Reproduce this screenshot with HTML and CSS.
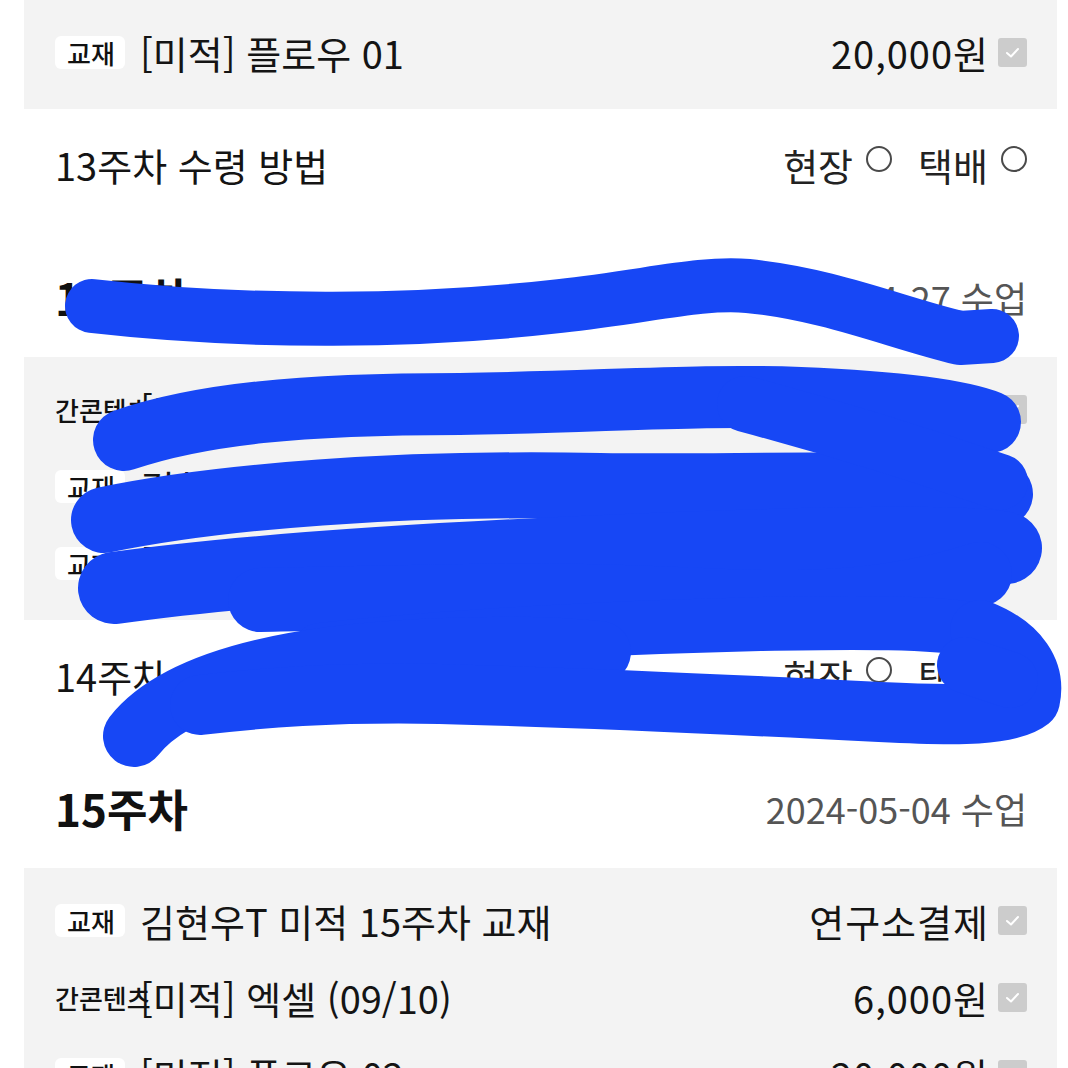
FILE: index.html
```html
<!DOCTYPE html>
<html lang="ko">
<head>
<meta charset="utf-8">
<title>수업 교재</title>
<link rel="stylesheet" href="styles.css">
</head>
<body>
<div class="page">
  <section class="panel">
    <div class="item">
      <span class="tag"><span class="tag-text tag-text--white">교재</span></span>
      <span class="item-name">[미적] 플로우 01</span>
      <span class="item-price">20,000원</span>
      <span class="check"><svg viewBox="0 0 29 29" width="29" height="29"><path d="M9 15 L13 18.5 L20 11" fill="none" stroke="#fff" stroke-width="2" stroke-linecap="round" stroke-linejoin="round"/></svg></span>
    </div>
  </section>

  <div class="receive">
    <span class="receive-title">13주차 수령 방법</span>
    <span class="opts">현장<i class="radio"></i>택배<i class="radio radio--last"></i></span>
  </div>

  <div class="week-head">
    <h2 class="week-title">14주차</h2>
    <span class="date">2024-04-27 수업</span>
  </div>

  <section class="panel">
    <div class="item">
      <span class="tag"><span class="tag-text">간콘텐츠</span></span>
      <span class="item-name">[미적] 엑셀 (09/09)</span>
      <span class="item-price">6,000원</span>
      <span class="check"><svg viewBox="0 0 29 29" width="29" height="29"><path d="M9 15 L13 18.5 L20 11" fill="none" stroke="#fff" stroke-width="2" stroke-linecap="round" stroke-linejoin="round"/></svg></span>
    </div>
    <div class="item">
      <span class="tag"><span class="tag-text tag-text--white">교재</span></span>
      <span class="item-name">김현우T 미적 14주차 교재</span>
      <span class="item-price">연구소결제</span>
      <span class="check"><svg viewBox="0 0 29 29" width="29" height="29"><path d="M9 15 L13 18.5 L20 11" fill="none" stroke="#fff" stroke-width="2" stroke-linecap="round" stroke-linejoin="round"/></svg></span>
    </div>
    <div class="item">
      <span class="tag"><span class="tag-text tag-text--white">교재</span></span>
      <span class="item-name">[미적] 플로우 02</span>
      <span class="item-price">20,000원</span>
      <span class="check"><svg viewBox="0 0 29 29" width="29" height="29"><path d="M9 15 L13 18.5 L20 11" fill="none" stroke="#fff" stroke-width="2" stroke-linecap="round" stroke-linejoin="round"/></svg></span>
    </div>
  </section>

  <div class="receive">
    <span class="receive-title">14주차 수령 방법</span>
    <span class="opts">현장<i class="radio"></i>택배<i class="radio radio--last"></i></span>
  </div>

  <div class="week-head">
    <h2 class="week-title">15주차</h2>
    <span class="date">2024-05-04 수업</span>
  </div>

  <section class="panel">
    <div class="item">
      <span class="tag"><span class="tag-text tag-text--white">교재</span></span>
      <span class="item-name">김현우T 미적 15주차 교재</span>
      <span class="item-price">연구소결제</span>
      <span class="check"><svg viewBox="0 0 29 29" width="29" height="29"><path d="M9 15 L13 18.5 L20 11" fill="none" stroke="#fff" stroke-width="2" stroke-linecap="round" stroke-linejoin="round"/></svg></span>
    </div>
    <div class="item">
      <span class="tag"><span class="tag-text">간콘텐츠</span></span>
      <span class="item-name">[미적] 엑셀 (09/10)</span>
      <span class="item-price">6,000원</span>
      <span class="check"><svg viewBox="0 0 29 29" width="29" height="29"><path d="M9 15 L13 18.5 L20 11" fill="none" stroke="#fff" stroke-width="2" stroke-linecap="round" stroke-linejoin="round"/></svg></span>
    </div>
    <div class="item">
      <span class="tag"><span class="tag-text tag-text--white">교재</span></span>
      <span class="item-name">[미적] 플로우 02</span>
      <span class="item-price">20,000원</span>
      <span class="check"><svg viewBox="0 0 29 29" width="29" height="29"><path d="M9 15 L13 18.5 L20 11" fill="none" stroke="#fff" stroke-width="2" stroke-linecap="round" stroke-linejoin="round"/></svg></span>
    </div>
  </section>

  <svg class="scribble" viewBox="0 0 1068 1068" width="1068" height="1068" aria-hidden="true">
    <g fill="none" stroke="#1747f5" stroke-linecap="round" stroke-linejoin="round">
      <path stroke-width="54" d="M92 306 C250 324 420 322 560 306 C650 296 700 282 748 286 C830 294 900 324 960 338 L992 336"/>
      <path stroke-width="62" d="M124 440 C200 414 300 404 460 404 C600 402 700 394 800 398 C900 402 960 410 990 422"/>
      <path stroke-width="66" d="M104 520 C220 496 400 482 600 486 C750 488 880 480 1000 494"/>
      <path stroke-width="56" d="M745 404 C850 432 930 458 1000 482"/>
      <path stroke-width="72" d="M114 588 C300 562 600 550 800 544 C900 542 980 542 1006 548"/>
      <path stroke-width="64" d="M260 600 C450 596 560 592 700 600 C820 606 900 600 980 574"/>
      <path stroke-width="54" d="M320 650 C450 636 600 628 760 624 C860 622 930 622 980 630"/>
      <path stroke-width="62" d="M134 736 C170 690 260 658 420 650 C520 646 560 648 600 652"/>
      <path stroke-width="60" d="M980 630 C1020 646 1036 672 1030 700 C1010 716 960 716 880 712 C760 706 600 698 440 694 C330 692 260 698 200 705"/>
      <path stroke-width="56" d="M965 665 L1010 680"/>
    </g>
  </svg>
</div>
</body>
</html>
```

FILE: styles.css
```css
html, body {
  margin: 0;
  padding: 0;
  background: #ffffff;
  overflow: hidden;
}

body {
  font-family: "Noto Sans CJK KR", "Noto Sans", sans-serif;
  color: #141414;
}

.page {
  position: relative;
  width: 1068px;
  height: 1068px;
  box-sizing: border-box;
  padding: 0 11px 0 24px;
}

.panel {
  background: #f3f3f3;
  padding: 14px 30px 18px 31px;
}

.item {
  display: flex;
  align-items: center;
  height: 77px;
}

.tag {
  width: 85px;
  flex-shrink: 0;
  white-space: nowrap;
  display: flex;
  align-items: center;
}

.tag-text {
  display: inline-block;
  font-size: 26px;
  font-weight: 500;
  line-height: 33px;
  height: 33px;
  color: #111;
}

.tag-text--white {
  background: #ffffff;
  padding: 0 10px 0 12px;
  border-radius: 6px;
}

.item-name {
  flex: 1;
  font-size: 38px;
  line-height: 46px;
  white-space: nowrap;
}

.item-price {
  font-size: 38px;
  line-height: 46px;
  white-space: nowrap;
  letter-spacing: 1px;
}

.check {
  width: 29px;
  height: 29px;
  margin-left: 9px;
  background: #cccccc;
  border-radius: 3px;
  flex-shrink: 0;
  display: flex;
}

.receive {
  display: flex;
  align-items: center;
  justify-content: space-between;
  height: 112px;
  padding: 0 30px 0 31px;
  font-size: 38px;
  line-height: 46px;
}

.opts {
  display: flex;
  align-items: flex-start;
  color: #222;
}

.radio {
  display: inline-block;
  width: 22px;
  height: 22px;
  border: 2px solid #4a4a4a;
  border-radius: 50%;
  margin: 4px 26px 0 13px;
}

.radio--last {
  margin-right: 0;
}

.week-head {
  display: flex;
  justify-content: space-between;
  align-items: center;
  height: 136px;
  box-sizing: border-box;
  padding: 56px 30px 40px 31px;
}

.week-title {
  margin: 0;
  font-size: 44px;
  line-height: 40px;
  font-weight: 700;
  color: #111;
}

.date {
  font-size: 36px;
  line-height: 40px;
  color: #555;
}

.scribble {
  position: absolute;
  left: 0;
  top: 0;
  pointer-events: none;
}
```
